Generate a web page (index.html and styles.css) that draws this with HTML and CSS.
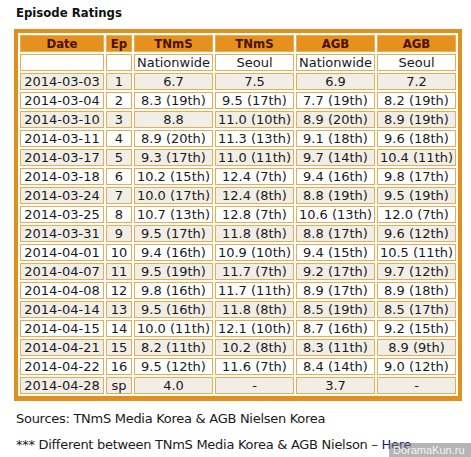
FILE: index.html
```html
<!DOCTYPE html>
<html lang="en">
<head>
    <meta charset="UTF-8">
    <title>Episode Ratings</title>
    <link rel="stylesheet" href="styles.css">
</head>
<body>
    <h3 class="title">Episode Ratings</h3>

    <table class="ratings">
        <colgroup>
            <col class="c-date">
            <col class="c-ep">
            <col class="c-num">
            <col class="c-num">
            <col class="c-num">
            <col class="c-num">
        </colgroup>
        <tr class="head">
            <th>Date</th><th>Ep</th><th>TNmS</th><th>TNmS</th><th>AGB</th><th>AGB</th>
        </tr>
        <tr class="even">
            <td></td><td></td><td>Nationwide</td><td>Seoul</td><td>Nationwide</td><td>Seoul</td>
        </tr>
        <tr class="odd"><td>2014-03-03</td><td>1</td><td>6.7</td><td>7.5</td><td>6.9</td><td>7.2</td></tr>
        <tr class="even"><td>2014-03-04</td><td>2</td><td>8.3 (19th)</td><td>9.5 (17th)</td><td>7.7 (19th)</td><td>8.2 (19th)</td></tr>
        <tr class="odd"><td>2014-03-10</td><td>3</td><td>8.8</td><td>11.0 (10th)</td><td>8.9 (20th)</td><td>8.9 (19th)</td></tr>
        <tr class="even"><td>2014-03-11</td><td>4</td><td>8.9 (20th)</td><td>11.3 (13th)</td><td>9.1 (18th)</td><td>9.6 (18th)</td></tr>
        <tr class="odd"><td>2014-03-17</td><td>5</td><td>9.3 (17th)</td><td>11.0 (11th)</td><td>9.7 (14th)</td><td>10.4 (11th)</td></tr>
        <tr class="even"><td>2014-03-18</td><td>6</td><td>10.2 (15th)</td><td>12.4 (7th)</td><td>9.4 (16th)</td><td>9.8 (17th)</td></tr>
        <tr class="odd"><td>2014-03-24</td><td>7</td><td>10.0 (17th)</td><td>12.4 (8th)</td><td>8.8 (19th)</td><td>9.5 (19th)</td></tr>
        <tr class="even"><td>2014-03-25</td><td>8</td><td>10.7 (13th)</td><td>12.8 (7th)</td><td>10.6 (13th)</td><td>12.0 (7th)</td></tr>
        <tr class="odd"><td>2014-03-31</td><td>9</td><td>9.5 (17th)</td><td>11.8 (8th)</td><td>8.8 (17th)</td><td>9.6 (12th)</td></tr>
        <tr class="even"><td>2014-04-01</td><td>10</td><td>9.4 (16th)</td><td>10.9 (10th)</td><td>9.4 (15th)</td><td>10.5 (11th)</td></tr>
        <tr class="odd"><td>2014-04-07</td><td>11</td><td>9.5 (19th)</td><td>11.7 (7th)</td><td>9.2 (17th)</td><td>9.7 (12th)</td></tr>
        <tr class="even"><td>2014-04-08</td><td>12</td><td>9.8 (16th)</td><td>11.7 (11th)</td><td>8.9 (17th)</td><td>8.9 (18th)</td></tr>
        <tr class="odd"><td>2014-04-14</td><td>13</td><td>9.5 (16th)</td><td>11.8 (8th)</td><td>8.5 (19th)</td><td>8.5 (17th)</td></tr>
        <tr class="even"><td>2014-04-15</td><td>14</td><td>10.0 (11th)</td><td>12.1 (10th)</td><td>8.7 (16th)</td><td>9.2 (15th)</td></tr>
        <tr class="odd"><td>2014-04-21</td><td>15</td><td>8.2 (11th)</td><td>10.2 (8th)</td><td>8.3 (11th)</td><td>8.9 (9th)</td></tr>
        <tr class="even"><td>2014-04-22</td><td>16</td><td>9.5 (12th)</td><td>11.6 (7th)</td><td>8.4 (14th)</td><td>9.0 (12th)</td></tr>
        <tr class="odd"><td>2014-04-28</td><td>sp</td><td>4.0</td><td>-</td><td>3.7</td><td>-</td></tr>
    </table>

    <p class="note">Sources: TNmS Media Korea &amp; AGB Nielsen Korea</p>
    <p class="note">*** Different between TNmS Media Korea &amp; AGB Nielson &ndash; <a href="#" class="link">Here</a></p>

    <div class="watermark">DoramaKun.ru</div>
</body>
</html>
```

FILE: styles.css
```css
* {
    margin: 0;
    padding: 0;
    box-sizing: border-box;
}

body {
    font-family: "DejaVu Sans", Verdana, sans-serif;
    font-size: 13px;
    color: #1a1a1a;
    background: white;
    padding: 5px 0 0 16px;
    position: relative;
    height: 457px;
    overflow: hidden;
}

.title {
    font-family: "DejaVu Sans Condensed", "DejaVu Sans", sans-serif;
    font-size: 13px;
    font-weight: bold;
    color: #111;
    line-height: 16px;
    margin-bottom: 8px;
}

.ratings {
    margin-left: -2px;
    width: 440px;
    table-layout: fixed;
    border: 4px solid #e1901f;
    border-bottom-width: 5px;
    border-spacing: 2px;
    background: #fffdf8;
}

.c-date { width: 84px; }
.c-ep { width: 26px; }
.c-num { width: 79px; }

.ratings th,
.ratings td {
    height: 17px;
    line-height: 15px;
    border: 1px solid #e6ad58;
    text-align: center;
    white-space: nowrap;
    padding: 0 1px;
}

.ratings th {
    font-family: "DejaVu Sans Condensed", "DejaVu Sans", sans-serif;
    background: #e6901e;
    color: #4a1200;
    font-weight: bold;
}

.ratings tr.odd td {
    background: #f1eee7;
}

.ratings tr.even td {
    background: #ffffff;
}

.note {
    margin-top: 9px;
    line-height: 17px;
    letter-spacing: -0.28px;
    color: #1a1a1a;
}

.note + .note {
    margin-top: 9px;
}

.link {
    color: #1b1b7a;
    text-decoration: none;
}

.watermark {
    position: absolute;
    right: 0;
    bottom: 0;
    width: 82px;
    height: 14px;
    background: rgba(120, 120, 120, 0.55);
    color: #f4f4f4;
    font-family: "Liberation Sans", Arial, sans-serif;
    font-size: 11px;
    line-height: 14px;
    padding-left: 4px;
}
```
